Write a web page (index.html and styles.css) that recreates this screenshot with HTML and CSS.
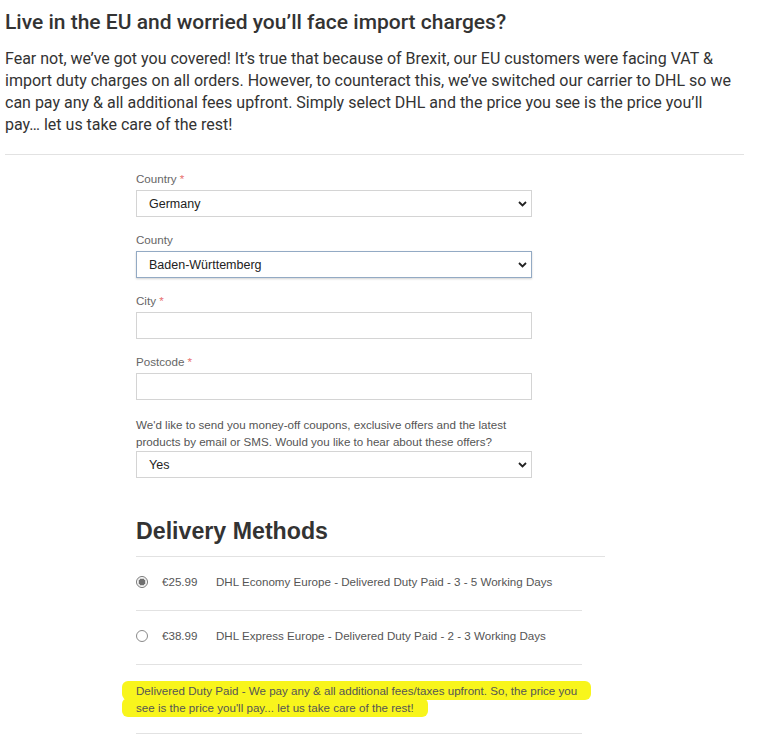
FILE: index.html
```html
<!DOCTYPE html>
<html lang="en">
<head>
<meta charset="utf-8">
<title>Checkout</title>
<link rel="stylesheet" href="styles.css">
</head>
<body>
<section class="intro">
  <h1 class="intro-title">Live in the EU and worried you’ll face import charges?</h1>
  <p class="intro-text">Fear not, we’ve got you covered! It’s true that because of Brexit, our EU customers were facing VAT &amp; import duty charges on all orders. However, to counteract this, we’ve switched our carrier to DHL so we can pay any &amp; all additional fees upfront. Simply select DHL and the price you see is the price you’ll pay…&nbsp;let us take care of the rest!</p>
  <hr class="intro-rule">
</section>

<main class="checkout">
  <form class="address">
    <div class="field">
      <label class="field-label">Country <span class="req">*</span></label>
      <div class="select-wrap">
        <select class="control"><option>Germany</option></select>
        <svg class="chev" width="9" height="6" viewBox="0 0 9 6"><path d="M1 1 L4.5 4.5 L8 1" fill="none" stroke="#222" stroke-width="1.8"/></svg>
      </div>
    </div>
    <div class="field">
      <label class="field-label">County</label>
      <div class="select-wrap">
        <select class="control control-focus"><option>Baden-Württemberg</option></select>
        <svg class="chev" width="9" height="6" viewBox="0 0 9 6"><path d="M1 1 L4.5 4.5 L8 1" fill="none" stroke="#222" stroke-width="1.8"/></svg>
      </div>
    </div>
    <div class="field">
      <label class="field-label">City <span class="req">*</span></label>
      <input class="control" type="text">
    </div>
    <div class="field">
      <label class="field-label">Postcode <span class="req">*</span></label>
      <input class="control" type="text">
    </div>
    <div class="field field-offers">
      <label class="field-label offers-label">We'd like to send you money-off coupons, exclusive offers and the latest products by email or SMS. Would you like to hear about these offers?</label>
      <div class="select-wrap">
        <select class="control"><option>Yes</option></select>
        <svg class="chev" width="9" height="6" viewBox="0 0 9 6"><path d="M1 1 L4.5 4.5 L8 1" fill="none" stroke="#222" stroke-width="1.8"/></svg>
      </div>
    </div>
  </form>

  <section class="delivery">
    <h2 class="delivery-title">Delivery Methods</h2>
    <ul class="methods">
      <li class="method">
        <span class="radio radio-on"></span>
        <span class="price">€25.99</span>
        <span class="method-name">DHL Economy Europe - Delivered Duty Paid - 3 - 5 Working Days</span>
      </li>
      <li class="method">
        <span class="radio"></span>
        <span class="price">€38.99</span>
        <span class="method-name">DHL Express Europe - Delivered Duty Paid - 2 - 3 Working Days</span>
      </li>
      <li class="note">
        <p class="note-text"><span class="mark">Delivered Duty Paid - We pay any &amp; all additional fees/taxes upfront. So, the price you see is the price you'll pay... let us take care of the rest!</span></p>
      </li>
    </ul>
  </section>
</main>
</body>
</html>
```

FILE: styles.css
```css
* { box-sizing: border-box; }

html, body {
  margin: 0;
  padding: 0;
  background: #fff;
}

body {
  width: 759px;
  height: 750px;
  overflow: hidden;
}

.intro {
  width: 744px;
  padding: 8px 0 0 5px;
  font-family: Roboto, "Liberation Sans", sans-serif;
  color: #333;
}

.intro-title {
  margin: 0;
  font-size: 21px;
  line-height: 28px;
  font-weight: 500;
  color: #333;
}

.intro-text {
  margin: 12px 0 0;
  font-size: 16px;
  line-height: 22px;
  font-weight: 400;
  color: #333;
}

.intro-rule {
  margin: 18px 0 0;
  border: 0;
  height: 1px;
  background: #e2e2e2;
}

.checkout {
  margin-left: 136px;
  font-family: "Liberation Sans", Arial, sans-serif;
  color: #555;
}

.address {
  width: 396px;
  padding-top: 17px;
}

.field {
  display: flex;
  flex-direction: column;
  margin-bottom: 16px;
}

.field-label {
  font-size: 11.6px;
  line-height: 14px;
  color: #666;
  margin-bottom: 4px;
}

.req {
  color: #e8706f;
}

.select-wrap {
  position: relative;
}

.control {
  display: block;
  width: 100%;
  height: 27px;
  margin: 0;
  padding: 0 0 0 12px;
  border: 1px solid #d4d4d4;
  border-radius: 0;
  background: #fff;
  font-family: "Liberation Sans", Arial, sans-serif;
  font-size: 12.5px;
  color: #222;
  appearance: none;
  -webkit-appearance: none;
  outline: none;
}

.control-focus {
  border-color: #93aac4;
  box-shadow: 0 1px 2px rgba(0, 0, 0, 0.18);
}

.chev {
  position: absolute;
  right: 5px;
  top: 11px;
  pointer-events: none;
}

.field-offers {
  margin-bottom: 0;
}

.offers-label {
  line-height: 17px;
  margin-bottom: 1px;
  color: #555;
}

.delivery {
  width: 469px;
  padding-top: 39px;
}

.delivery-title {
  margin: 0;
  font-size: 23.2px;
  line-height: 28px;
  font-weight: 700;
  color: #333;
  padding-bottom: 11px;
  border-bottom: 1px solid #e2e2e2;
}

.methods {
  list-style: none;
  margin: 0;
  padding: 0;
  width: 446px;
}

.method {
  display: flex;
  align-items: center;
  padding: 16px 0 20px;
  border-bottom: 1px solid #e2e2e2;
  font-size: 11.6px;
  line-height: 17px;
  color: #555;
}

.radio {
  flex: none;
  width: 12px;
  height: 12px;
  border: 1px solid #8a8a8a;
  border-radius: 50%;
  background: #fff;
}

.radio-on {
  border-color: #777;
  background: radial-gradient(circle, #6f6f6f 0 3px, #d8d8d8 3.5px 4px, #fff 4.5px);
}

.price {
  flex: none;
  width: 54px;
  margin-left: 14px;
}

.method-name {
  flex: none;
}

.note {
  padding: 17px 0 17px;
  border-bottom: 1px solid #e2e2e2;
}

.note-text {
  margin: 0;
  font-size: 11.6px;
  line-height: 17px;
  color: #555;
}

.mark {
  background: #f8f51c;
  padding: 3px 14px;
  margin-left: -14px;
  box-decoration-break: clone;
  -webkit-box-decoration-break: clone;
  border-radius: 6px;
}
```
